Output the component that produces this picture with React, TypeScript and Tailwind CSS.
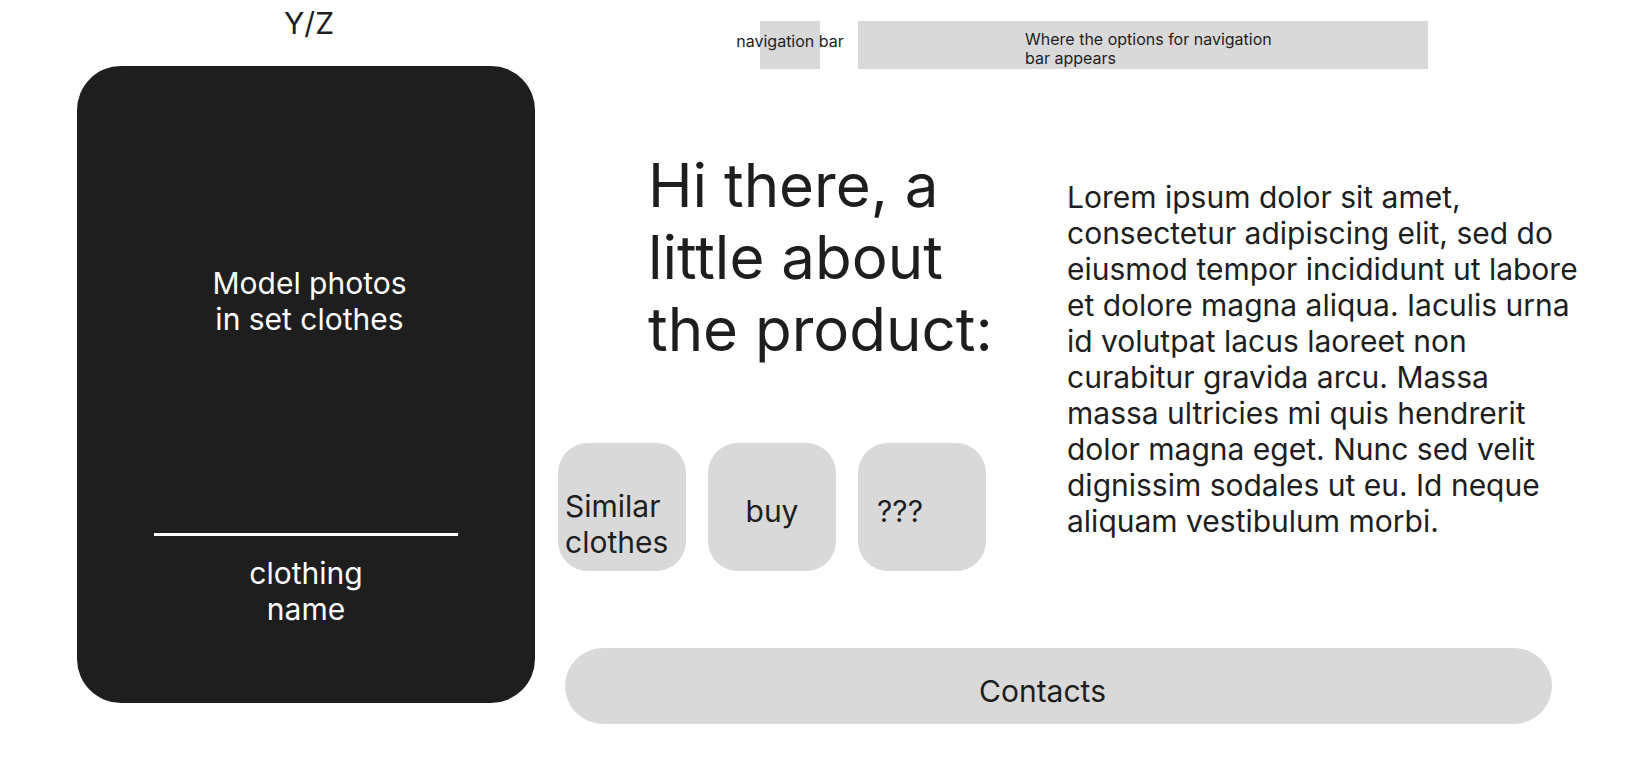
const lorem =
    'Lorem ipsum dolor sit amet, consectetur adipiscing elit, sed do eiusmod tempor incididunt ut labore et dolore magna aliqua. Iaculis urna id volutpat lacus laoreet non curabitur gravida arcu. Massa massa ultricies mi quis hendrerit dolor magna eget. Nunc sed velit dignissim sodales ut eu. Id neque aliquam vestibulum morbi.';

const ProductCard = () => {
    return (
        <div className="w-[458px] flex flex-col">
            <div className="pt-[5px] pl-[6px] text-center text-[30px] leading-[36px]">Y/Z</div>
            <div className="mt-[25px] h-[637px] rounded-[44px] bg-[#1e1e1e] text-white flex flex-col items-center">
                <p className="pt-[199px] pl-[7px] text-center text-[30px] leading-[36px]">
                    Model photos
                    <br />
                    in set clothes
                </p>
                <div className="mt-[196px] w-[304px] h-[3px] bg-white" />
                <p className="mt-[19px] text-center text-[30px] leading-[36px]">
                    clothing
                    <br />
                    name
                </p>
            </div>
        </div>
    );
};

const ActionButton = ({ label, className }: { label: React.ReactNode; className: string }) => (
    <button className={`w-[128px] h-[128px] rounded-[30px] bg-[#d9d9d9] flex items-center text-left text-[30px] leading-[36px] ${className}`}>
        {label}
    </button>
);

export default function App() {
    return (
        <div className="w-full h-[781px] bg-white text-[#1e1e1e] font-[Inter,sans-serif] flex">
            <div className="ml-[77px]">
                <ProductCard />
            </div>

            <div className="flex flex-col">
                {/* navigation */}
                <div className="mt-[21px] ml-[225px] flex gap-[38px]">
                    <div className="w-[60px] h-[48px] bg-[#d9d9d9] flex items-center justify-center">
                        <span className="whitespace-nowrap text-[16px] leading-[19px] pb-[8px]">navigation bar</span>
                    </div>
                    <div className="w-[570px] h-[48px] bg-[#d9d9d9] flex items-center">
                        <p className="ml-[167px] w-[260px] pt-[7px] text-[16px] leading-[19px]">
                            Where the options for navigation bar appears
                        </p>
                    </div>
                </div>

                <div className="flex">
                    <div className="w-[532px] flex flex-col">
                        <h1 className="mt-[80px] ml-[113px] text-[60px] leading-[72px]">
                            Hi there, a
                            <br />
                            little about
                            <br />
                            the product:
                        </h1>
                        <div className="mt-[78px] ml-[23px] flex gap-[22px]">
                            <ActionButton
                                className="pt-[34px] pl-[7px]"
                                label={
                                    <>
                                        Similar
                                        <br />
                                        clothes
                                    </>
                                }
                            />
                            <ActionButton className="pt-[8px] justify-center" label="buy" />
                            <ActionButton className="pt-[8px] pl-[19px]" label="???" />
                        </div>
                    </div>
                    <p className="mt-[110px] w-[520px] text-[30px] leading-[36px]">{lorem}</p>
                </div>

                <div className="mt-[77px] ml-[30px] w-[987px] h-[76px] rounded-full bg-[#d9d9d9] flex items-center justify-center pt-[10px] pr-[32px] text-[30px] leading-[36px]">
                    Contacts
                </div>
            </div>
        </div>
    );
}
